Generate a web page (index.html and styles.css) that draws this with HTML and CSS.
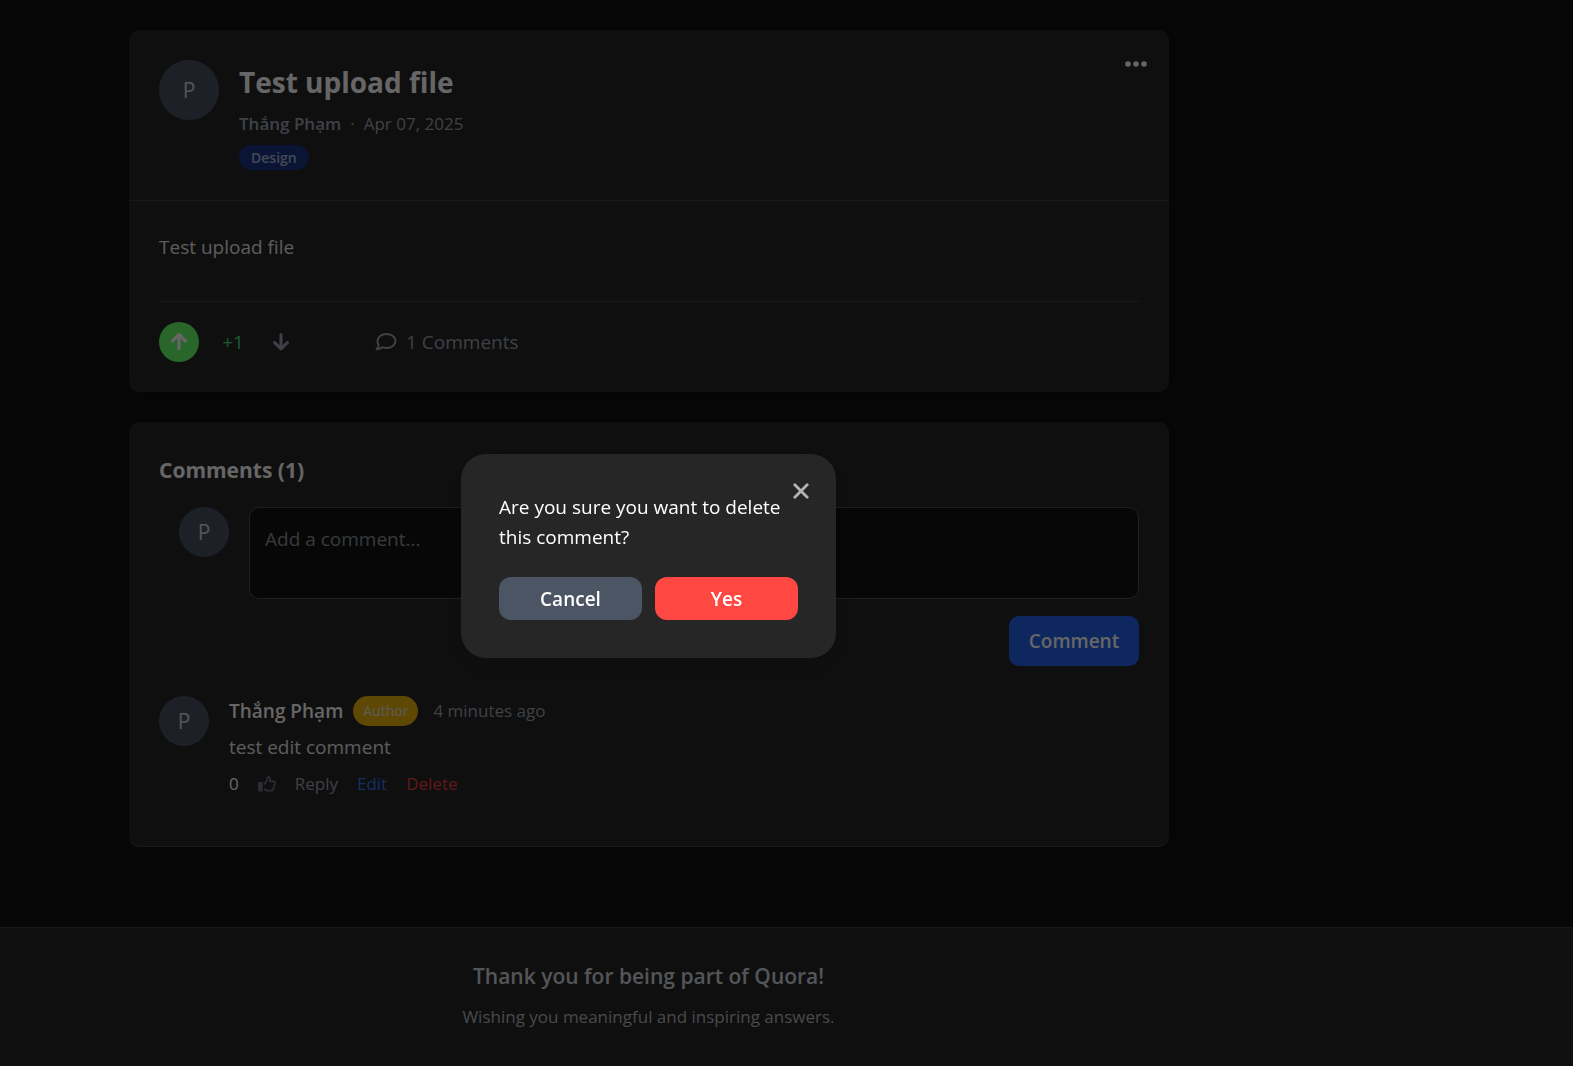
FILE: index.html
```html
<!DOCTYPE html>
<html lang="en">
<head>
<meta charset="utf-8">
<meta name="viewport" content="width=device-width, initial-scale=1">
<title>Test upload file - Quora</title>
<link rel="stylesheet" href="styles.css">
</head>
<body>
<div class="page">
  <main class="main">
    <article class="card">
      <header class="post-header">
        <span class="avatar avatar-large">P</span>
        <div class="post-heading">
          <h1 class="post-title">Test upload file</h1>
          <p class="post-meta"><span class="post-author">Thắng Phạm</span><span>·</span><time datetime="2025-04-07">Apr 07, 2025</time></p>
          <span class="tag">Design</span>
        </div>
        <button class="icon-button more" type="button" aria-label="More options">
          <svg width="24" height="8" viewBox="0 0 24 8" fill="currentColor"><circle cx="4" cy="4" r="2.800"/><circle cx="12" cy="4" r="2.800"/><circle cx="20" cy="4" r="2.800"/></svg>
        </button>
      </header>
      <div class="post-body">
        <p class="post-text">Test upload file</p>
        <div class="post-actions">
          <button class="icon-button vote vote-active" type="button" aria-label="Upvote">
            <svg width="18" height="20" viewBox="0 0 18 20" fill="none" stroke="currentColor" stroke-width="3.200" stroke-linecap="round" stroke-linejoin="round"><path d="M9 17V3M2.500 9 9 2.500 15.500 9"/></svg>
          </button>
          <span class="score">+1</span>
          <button class="icon-button vote" type="button" aria-label="Downvote">
            <svg width="18" height="20" viewBox="0 0 18 20" fill="none" stroke="currentColor" stroke-width="3" stroke-linecap="round" stroke-linejoin="round"><path d="M9 2.500V16.500M2.500 10.500 9 17 15.500 10.500"/></svg>
          </button>
          <span class="comment-count">
            <svg width="22" height="20" viewBox="0 0 22 20" fill="none" stroke="currentColor" stroke-width="2" stroke-linejoin="round"><path d="M11.500 2c5 0 9 3 9 7s-4 7-9 7c-1.500 0-3-.3-4.200-.8-1.600 1.200-3.500 2-5.800 2 1-.9 1.900-2.200 2.200-3.800C2.900 12.200 2.500 10.700 2.500 9c0-4 4-7 9-7Z"/></svg>
            1 Comments
          </span>
        </div>
      </div>
    </article>

    <section class="card comments">
      <h2 class="comments-title">Comments (1)</h2>
      <form class="comment-form">
        <span class="avatar">P</span>
        <textarea class="comment-input" aria-label="Add a comment" placeholder="Add a comment..."></textarea>
        <button class="button-primary" type="button">Comment</button>
      </form>
      <article class="comment">
        <span class="avatar">P</span>
        <div class="comment-content">
          <div class="comment-head">
            <span class="comment-author">Thắng Phạm</span>
            <span class="author-badge">Author</span>
            <span class="comment-time">4 minutes ago</span>
          </div>
          <p class="comment-text">test edit comment</p>
          <div class="comment-actions">
            <span class="like-count">0</span>
            <button class="icon-button like" type="button" aria-label="Like">
              <svg width="18" height="18" viewBox="0 0 19 18"><path fill="currentColor" d="M0 7h5v10H1.500A1.500 1.500 0 0 1 0 15.500Z"/><path fill="none" stroke="currentColor" stroke-width="1.800" stroke-linejoin="round" d="M6.500 9.500 8.300 7c.8-1 1.200-2 1.300-3.400C9.700 2 10.300 1.300 11.200 1.500c1.600.3 1.700 2.300.9 4.700h4.200c1.500 0 2 1 1.600 2.200l-2 6c-.4 1.200-1.200 1.700-2.400 1.700h-2.700c-1.600 0-3-.7-4.300-1.800"/></svg>
            </button>
            <button class="text-button" type="button">Reply</button>
            <button class="text-button edit" type="button">Edit</button>
            <button class="text-button delete" type="button">Delete</button>
          </div>
        </div>
      </article>
    </section>
  </main>
  <footer class="footer">
    <h2 class="footer-title">Thank you for being part of Quora!</h2>
    <p class="footer-text">Wishing you meaningful and inspiring answers.</p>
  </footer>
</div>

<div class="overlay">
  <div class="modal" role="dialog" aria-modal="true" aria-labelledby="modal-text">
    <button class="icon-button close" type="button" aria-label="Close">
      <svg width="16" height="16" viewBox="0 0 16 16" fill="none" stroke="currentColor" stroke-width="2.800" stroke-linecap="round"><path d="M1.800 1.800l12.400 12.400M14.200 1.800 1.800 14.200"/></svg>
    </button>
    <p class="modal-text" id="modal-text">Are you sure you want to delete this comment?</p>
    <div class="modal-actions">
      <button class="modal-button" type="button">Cancel</button>
      <button class="modal-button confirm" type="button">Yes</button>
    </div>
  </div>
</div>
</body>
</html>
```
FILE: styles.css
```css
:root {
  --side: 276px;
  --surface: #262626;
  --muted: #9ca3af;
}

* {
  box-sizing: border-box;
  margin: 0;
}

body {
  background: #121212;
  color: #fff;
  font: 19px/30px "Open Sans", "Noto Sans", sans-serif;
}

button,
textarea {
  font: inherit;
  color: inherit;
}

button {
  border: 0;
  padding: 0;
  background: none;
  cursor: pointer;
}

svg {
  display: block;
}

.page {
  display: flex;
  flex-direction: column;
  min-height: 100vh;
}

.main {
  display: flex;
  flex-direction: column;
  gap: 30px;
  width: 100%;
  padding: 30px calc(var(--side) + 128px) 80px 129px;
}

.card {
  background: var(--surface);
  border-radius: 10px;
  box-shadow: 0 4px 8px rgba(0, 0, 0, 0.3);
}

.avatar {
  display: flex;
  flex: none;
  align-items: center;
  justify-content: center;
  width: 50px;
  height: 50px;
  border-radius: 50%;
  background: #4b5163;
  color: #d1d5db;
  font-size: 21px;
}

.avatar-large {
  width: 60px;
  height: 60px;
}

.icon-button {
  display: flex;
  align-items: center;
  justify-content: center;
}

.post-header {
  display: flex;
  align-items: flex-start;
  gap: 20px;
  padding: 30px 21px 30px 30px;
  border-bottom: 1px solid #374151;
}

.post-heading {
  display: flex;
  flex: 1;
  flex-direction: column;
  align-items: flex-start;
}

.post-title {
  margin-bottom: 5px;
  font-size: 28px;
  line-height: 45px;
}

.post-meta {
  display: flex;
  gap: 9px;
  margin-bottom: 7px;
  color: var(--muted);
  font-size: 17px;
  line-height: 28px;
}

.post-author {
  font-weight: 600;
}

.tag {
  padding: 0 12px;
  border-radius: 13px;
  background: #1a3386;
  color: #a9b9d4;
  font-size: 14px;
  font-weight: 600;
  line-height: 25px;
}

.more {
  height: 8px;
}

.post-body {
  padding: 31px 30px 30px;
}

.post-text {
  margin-bottom: 39px;
  color: #e5e5e5;
}

.post-actions {
  display: flex;
  align-items: center;
  padding-top: 20px;
  border-top: 1px solid #404040;
}

.vote {
  width: 40px;
  height: 40px;
  border-radius: 50%;
  color: var(--muted);
}

.vote-active {
  background: #66ff66;
  color: #fff;
}

.score {
  width: 62px;
  padding-left: 6px;
  color: #4ade80;
  text-align: center;
}

.comment-count {
  display: flex;
  align-items: center;
  gap: 9px;
  margin-left: 74px;
  color: var(--muted);
}

.comments {
  padding: 30px 30px 47px;
  border-bottom: 1px solid #374151;
}

.comments-title {
  margin-bottom: 19px;
  font-size: 21px;
  line-height: 36px;
}

.comment-form {
  display: grid;
  grid-template-columns: auto 1fr;
  gap: 17px 20px;
  margin-bottom: 30px;
  padding-left: 20px;
}

.comment-input {
  height: 92px;
  padding: 16px 15px;
  border: 1px solid #4b5163;
  border-radius: 10px;
  background: #121212;
  resize: none;
}

.comment-input::placeholder {
  color: #8b929b;
  opacity: 1;
}

.button-primary {
  grid-column: 2;
  justify-self: end;
  width: 130px;
  height: 50px;
  border-radius: 10px;
  background: #2563eb;
  font-weight: 600;
}

.comment {
  display: flex;
  gap: 20px;
}

.comment-head {
  display: flex;
  gap: 10px;
}

.comment-author {
  font-weight: 600;
}

.author-badge {
  padding: 0 10px;
  border-radius: 15px;
  background: #eab308;
  color: #e5e5e5;
  font-size: 14px;
}

.comment-time {
  margin-left: 5px;
  color: var(--muted);
  font-size: 17px;
}

.comment-text {
  margin: 6px 0 7px;
  color: #e5e5e5;
}

.comment-actions {
  display: flex;
  align-items: center;
  gap: 19px;
  font-size: 17px;
}

.like {
  color: #6b7280;
}

.text-button {
  color: var(--muted);
}

.edit {
  color: #3574f5;
}

.delete {
  color: #ef3c3c;
}

.footer {
  flex: 1;
  padding: 30px var(--side) 30px 0;
  border-top: 1px solid #404040;
  background: var(--surface);
  text-align: center;
}

.footer-title {
  margin-bottom: 8px;
  color: #d1d5db;
  font-size: 21px;
  font-weight: 600;
  line-height: 36px;
}

.footer-text {
  color: #b4b8be;
  font-size: 17px;
}

.overlay {
  position: fixed;
  inset: 0;
  display: flex;
  align-items: center;
  justify-content: center;
  padding: 46px var(--side) 0 0;
  background: rgba(0, 0, 0, 0.6);
}

.modal {
  position: relative;
  width: 375px;
  padding: 38px;
  border-radius: 25px;
  background: var(--surface);
  box-shadow: 0 10px 30px rgba(0, 0, 0, 0.1);
}

.close {
  position: absolute;
  top: 24px;
  right: 22px;
  width: 26px;
  height: 26px;
  color: #b4b4b4;
}

.modal-text {
  margin-bottom: 25px;
}

.modal-actions {
  display: grid;
  grid-template-columns: 1fr 1fr;
  gap: 13px;
}

.modal-button {
  height: 43px;
  border-radius: 12px;
  background: #4b5563;
  font-weight: 600;
}

.confirm {
  background: #ff4842;
}
```
